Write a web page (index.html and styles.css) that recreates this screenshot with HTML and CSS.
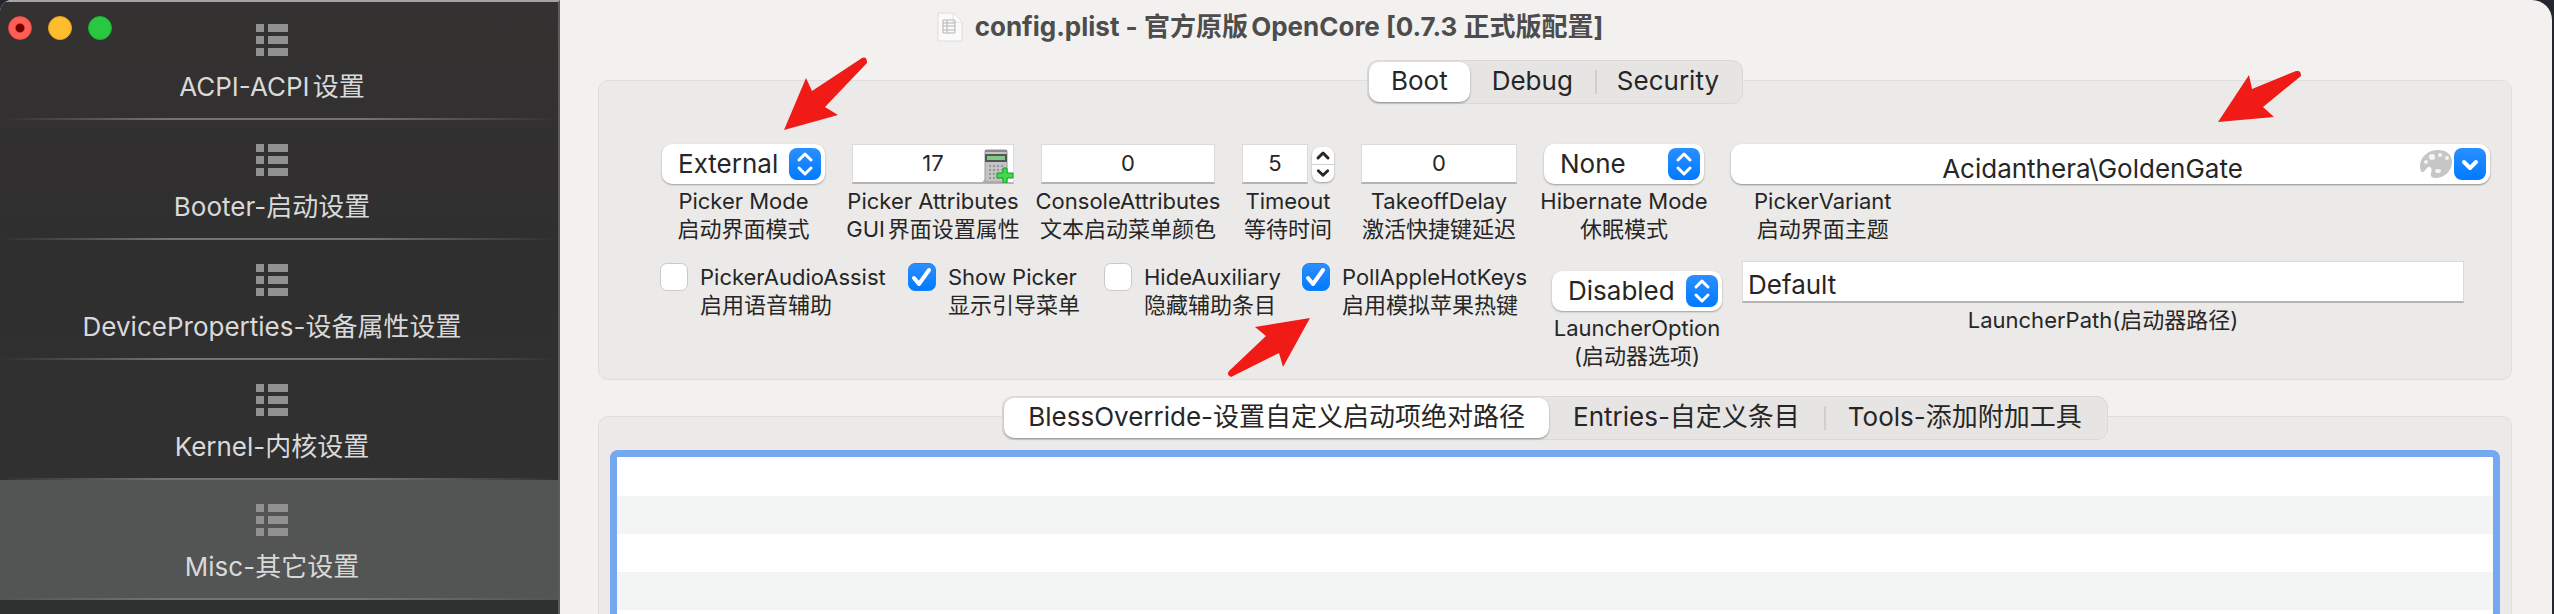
FILE: index.html
```html
<!DOCTYPE html>
<html lang="zh-CN">
<head>
<meta charset="utf-8">
<title>config.plist - 官方原版OpenCore</title>
<link rel="stylesheet" href="styles.css">
</head>
<body>
<svg class="defs" aria-hidden="true">
  <symbol id="list" viewBox="0 0 32 32"><path d="M0 0h8v8H0zM12 0h20v8H12zM0 12h8v8H0zM12 12h20v8H12zM0 24h8v8H0zM12 24h20v8H12z"/></symbol>
  <symbol id="updown" viewBox="0 0 32 32"><path d="M10 12l6-6 6 6M10 20l6 6 6-6" fill="none" stroke="#fff" stroke-width="3" stroke-linecap="round" stroke-linejoin="round"/></symbol>
</svg>
<div class="window">
  <aside class="sidebar">
    <div class="lights">
      <button class="light close" aria-label="Close"></button>
      <button class="light minimize" aria-label="Minimize"></button>
      <button class="light zoom" aria-label="Zoom"></button>
    </div>
    <nav class="nav">
      <a class="item" href="#acpi"><svg class="glyph"><use href="#list"/></svg><span>ACPI-ACPI设置</span></a>
      <a class="item" href="#booter"><svg class="glyph"><use href="#list"/></svg><span>Booter-启动设置</span></a>
      <a class="item" href="#device"><svg class="glyph"><use href="#list"/></svg><span>DeviceProperties-设备属性设置</span></a>
      <a class="item" href="#kernel"><svg class="glyph"><use href="#list"/></svg><span>Kernel-内核设置</span></a>
      <a class="item selected" href="#misc"><svg class="glyph"><use href="#list"/></svg><span>Misc-其它设置</span></a>
      <a class="item" href="#nvram" aria-label="NVRAM"></a>
    </nav>
  </aside>
  <main class="main">
    <header class="titlebar">
      <svg class="doc" viewBox="0 0 26 30"><path d="M1 1h15l9 9v19H1z" fill="#fafafa" stroke="#dedcda"/><path d="M16 1v9h9z" fill="#fff" stroke="#e4e2e0"/><path d="M6 8h12v13H6zM6 11h12M6 14h12M6 18h12M10 8v13" fill="none" stroke="#b4b3b2"/></svg>
      <h1 class="title">config.plist - 官方原版OpenCore [0.7.3 正式版配置]</h1>
    </header>

    <section class="panel boot">
      <div class="tabs">
        <button class="tab on">Boot</button>
        <button class="tab">Debug</button>
        <button class="tab ruled">Security</button>
      </div>
      <div class="fields">
        <div class="field mode">
          <div class="popup"><select id="mode"><option>External</option></select><svg class="chip"><use href="#updown"/></svg></div>
          <label for="mode">Picker Mode<br>启动界面模式</label>
        </div>
        <div class="field attrs">
          <div class="boxed">
            <input class="text" id="attrs" value="17">
            <button class="calc" aria-label="Calculator"><svg viewBox="0 0 32 34"><path d="M0 33l3-3v3z" fill="#bbb"/><rect x="3" y="1" width="22" height="32" rx="1" fill="#c4c4c4" stroke="#9a9a9a"/><path d="M3 2h22" stroke="#8a8a8a" stroke-width="2"/><rect x="4" y="6" width="20" height="6" fill="#82c987" stroke="#555" stroke-width="2"/><path d="M7 17h16M7 21h16M7 25h16M7 29h16" stroke="#999" stroke-width="2" stroke-dasharray="2 2"/><path d="M21 19h4v5h6v5h-6v5h-4v-5h-6v-5h6z" fill="#3ddc4b" stroke="#159a24" stroke-width="1"/></svg></button>
          </div>
          <label for="attrs">Picker Attributes<br>GUI界面设置属性</label>
        </div>
        <div class="field console">
          <input class="text" id="console" value="0">
          <label for="console">ConsoleAttributes<br>文本启动菜单颜色</label>
        </div>
        <div class="field timeout">
          <div class="stepped">
            <input class="text" id="timeout" value="5">
            <div class="stepper">
              <button aria-label="Increase"><svg viewBox="0 0 22 17"><path d="M6 11l5-5 5 5"/></svg></button>
              <button aria-label="Decrease"><svg viewBox="0 0 22 17"><path d="M6 6l5 5 5-5"/></svg></button>
            </div>
          </div>
          <label for="timeout">Timeout<br>等待时间</label>
        </div>
        <div class="field takeoff">
          <input class="text" id="takeoff" value="0">
          <label for="takeoff">TakeoffDelay<br>激活快捷键延迟</label>
        </div>
        <div class="field hibernate">
          <div class="popup"><select id="hibernate"><option>None</option></select><svg class="chip"><use href="#updown"/></svg></div>
          <label for="hibernate">Hibernate Mode<br>休眠模式</label>
        </div>
        <div class="field variant">
          <div class="combo">
            <input id="variant" value="Acidanthera\GoldenGate">
            <svg class="palette" viewBox="0 0 32 28"><path fill="#c6c6c6" d="M0 15C1 6 9 0 18 0c8 0 14 4 14 12 0 9-8 16-16 16-4 0-6-2-5-5 1-3 1-5-1-6-3-1-4 4-7 5-2 1-3-2-3-7z"/><g fill="#f4f4f4"><circle cx="6" cy="12" r="2"/><circle cx="12" cy="7" r="3"/><circle cx="20" cy="5" r="2"/><circle cx="27" cy="8" r="2"/><ellipse cx="18" cy="21" rx="3" ry="2"/></g></svg>
            <button class="drop" aria-label="Show choices"><svg viewBox="0 0 32 32"><path d="M10 14l6 6 6-6" fill="none" stroke="#fff" stroke-width="4" stroke-linecap="round" stroke-linejoin="round"/></svg></button>
          </div>
          <label for="variant">PickerVariant<br>启动界面主题</label>
        </div>
      </div>
      <div class="checks">
        <label class="check"><input type="checkbox"><span>PickerAudioAssist<br>启用语音辅助</span></label>
        <label class="check"><input type="checkbox" checked><span>Show Picker<br>显示引导菜单</span></label>
        <label class="check"><input type="checkbox"><span>HideAuxiliary<br>隐藏辅助条目</span></label>
        <label class="check"><input type="checkbox" checked><span>PollAppleHotKeys<br>启用模拟苹果热键</span></label>
        <div class="field option">
          <div class="popup"><select id="option"><option>Disabled</option></select><svg class="chip"><use href="#updown"/></svg></div>
          <label for="option">LauncherOption<br>(启动器选项)</label>
        </div>
        <div class="field path">
          <input class="text" id="path" value="Default">
          <label for="path">LauncherPath(启动器路径)</label>
        </div>
      </div>
      <svg class="arrow arrow-mode" viewBox="0 0 84 74"><path d="M0 73L22 21 28 34 78 1Q83-1 83 6L41 50 54 58z"/></svg>
      <svg class="arrow arrow-keys" viewBox="0 0 84 60"><path d="M83 0L28 9 39 18 2 53Q-1 57 4 59L52 35 56 49z"/></svg>
      <svg class="arrow arrow-variant" viewBox="0 0 84 52"><path d="M0 51L31 4 34 18 78 0Q83-1 83 5L45 36 56 46z"/></svg>
    </section>

    <section class="panel bless">
      <div class="tabs">
        <button class="tab on">BlessOverride-设置自定义启动项绝对路径</button>
        <button class="tab">Entries-自定义条目</button>
        <button class="tab ruled">Tools-添加附加工具</button>
      </div>
      <div class="list" tabindex="0"></div>
    </section>
  </main>
</div>
</body>
</html>
```

FILE: styles.css
```css
* { box-sizing: border-box; }
body {
  margin: 0;
  height: 100vh;
  overflow: hidden;
  background: #23262f;
  color: #262626;
  font-family: Inter, "Noto Sans CJK SC", sans-serif;
  font-size: 26px;
  text-autospace: normal;
}
button, input, select { font: inherit; color: inherit; margin: 0; padding: 0; border: 0; background: none; }
.defs { position: absolute; width: 0; height: 0; }

.window {
  display: flex;
  height: 100%;
  margin-right: 2px;
  border-radius: 12px 20px 0 0;
  overflow: hidden;
  background: #f3f1ef;
}

.sidebar {
  position: relative;
  flex: none;
  width: 560px;
  border-top: 2px solid #a3a3a3;
  border-right: 2px solid #5c5c5c;
  background: linear-gradient(#343131, #302f2f 40%, #2f3130);
}
.lights { position: absolute; top: 14px; left: 8px; display: flex; gap: 16px; }
.light { width: 24px; height: 24px; border-radius: 50%; }
.close { background: radial-gradient(circle, #730000 4px, #ff5f57 5px); border: 1px solid #e2463f; }
.minimize { background: #febc2e; border: 1px solid #e1a325; }
.zoom { background: #28c840; border: 1px solid #1fae2f; }
.nav { display: flex; flex-direction: column; margin-top: -2px; }
.item {
  flex: none;
  display: flex;
  flex-direction: column;
  align-items: center;
  gap: 15px;
  height: 120px;
  padding: 24px 14px 0 0;
  color: #d9d9d9;
  line-height: 32px;
  text-decoration: none;
  background: linear-gradient(90deg, transparent, #737373 30%, #737373 65%, transparent) bottom / 100% 2px no-repeat;
}
.selected { background-color: #535454; }
.glyph { width: 32px; height: 32px; fill: #919191; }

.main { flex: 1; min-width: 0; display: flex; flex-direction: column; padding: 0 40px 0 38px; }
.titlebar { display: flex; justify-content: center; gap: 12px; height: 80px; padding-top: 12px; margin-right: 570px; }
.doc { width: 26px; height: 30px; }
.title { margin: 0; font-size: 26px; line-height: 30px; font-weight: 700; color: #4d4d4d; white-space: nowrap; }

.panel {
  position: relative;
  border: 1px solid #dfdedc;
  border-radius: 10px;
  background: #ebeae8;
}
.boot { height: 300px; }
.bless { flex: 1; margin-top: 36px; padding: 0 11px; border-bottom: 0; border-radius: 10px 10px 0 0; }
.tabs {
  display: flex;
  width: max-content;
  height: 44px;
  margin: -21px auto 0;
  padding: 1px;
  border: 1px solid #dad9d7;
  border-radius: 11px;
  background: #e6e5e3;
}
.tab { position: relative; padding: 0 24px 2px; border-radius: 10px; line-height: 38px; white-space: nowrap; }
.boot .tab { padding: 0 22px 2px; }
.on { background: #fff; box-shadow: 0 1px 2px #00000066; }
.ruled::before { content: ""; position: absolute; left: 0; top: 8px; width: 2px; height: 24px; background: #d0cfcd; }

.fields { display: flex; gap: 27px; padding: 40px 21px 0 63px; }
.field { display: flex; flex-direction: column; align-items: center; flex: none; }
.field label, .check { font-size: 22px; line-height: 28px; text-align: center; white-space: nowrap; }
.field label { margin-top: 3px; }
.mode { width: 163px; }
.attrs { width: 162px; }
.console { width: 174px; }
.timeout { width: 92px; }
.takeoff { width: 156px; }
.hibernate { width: 160px; }
.variant { flex: 1; align-items: stretch; }
.variant label { align-self: flex-start; margin-left: 23px; }

.popup { position: relative; width: 100%; }
.popup select {
  appearance: none;
  display: block;
  width: 100%;
  height: 40px;
  padding: 0 0 2px 16px;
  border-radius: 10px;
  background: #fff;
  box-shadow: 0 1px 2px #00000055;
}
.chip, .drop { width: 32px; height: 32px; border-radius: 8px; background: linear-gradient(#2b8fff, #007aff); }
.chip { position: absolute; right: 4px; top: 4px; pointer-events: none; }
.text {
  display: block;
  width: 100%;
  height: 40px;
  background: #fff;
  border: 1px solid #dcdbd9;
  border-bottom: 2px solid #b5b4b2;
  padding-bottom: 2px;
  font-size: 22px;
  text-align: center;
}
.boxed { position: relative; width: 100%; }
.calc { position: absolute; right: 0; top: 5px; width: 32px; height: 34px; }
.calc svg, .stepper svg, .drop svg { display: block; width: 100%; height: 100%; }
.stepped { display: flex; align-items: center; gap: 4px; width: 100%; }
.stepped .text { flex: 1; min-width: 0; }
.stepper { width: 22px; height: 35px; border-radius: 8px; background: #fff; box-shadow: 0 1px 2px #00000055; overflow: hidden; }
.stepper button { display: block; width: 22px; height: 17px; }
.stepper button + button { border-top: 1px solid #d0d0d0; }
.stepper path { fill: none; stroke: #262626; stroke-width: 3; stroke-linecap: round; stroke-linejoin: round; }
.combo {
  display: flex;
  align-items: center;
  gap: 2px;
  height: 40px;
  padding-right: 4px;
  border-radius: 11px;
  background: #fff;
  box-shadow: 0 1px 2px #00000066;
}
.combo input { flex: 1; min-width: 0; height: 40px; padding: 9px 0 0 36px; text-align: center; }
.palette { width: 32px; height: 28px; }

.checks {
  display: grid;
  grid-template-columns: 248px 196px 198px 250px 170px 1fr;
  padding: 20px 47px 0 61px;
}
.check { display: flex; align-items: flex-start; gap: 12px; text-align: left; }
.check input {
  appearance: none;
  flex: none;
  width: 28px;
  height: 28px;
  border: 1px solid #cbcac8;
  border-radius: 7px;
  background: #fff;
}
.check input:checked {
  border-color: #1584ff;
  background: url("data:image/svg+xml,%3Csvg xmlns='http://www.w3.org/2000/svg' viewBox='0 0 28 28'%3E%3Cpath d='M6 15l5 6L21 7' fill='none' stroke='white' stroke-width='4' stroke-linecap='round' stroke-linejoin='round'/%3E%3C/svg%3E") center / 28px 28px no-repeat, linear-gradient(#2b8fff, #007aff);
}
.option { padding-top: 8px; }
.path { padding-left: 20px; }
.path .text { height: 42px; margin-top: -2px; padding: 5px 0 0 5px; font-size: 26px; text-align: left; }

.arrow { position: absolute; fill: #f01a17; width: 84px; pointer-events: none; }
.arrow-mode { left: 185px; top: -24px; height: 74px; }
.arrow-keys { left: 628px; top: 237px; height: 60px; }
.arrow-variant { right: 209px; top: -10px; height: 52px; }

.list {
  height: calc(100% - 33px);
  margin-top: 10px;
  border: 7px solid #76a8ef;
  border-bottom: 0;
  border-radius: 8px 8px 0 0;
  background: repeating-linear-gradient(#fff 0 38px, #f3f5f4 38px 76px) 0 1px;
  outline: 0;
}
```
